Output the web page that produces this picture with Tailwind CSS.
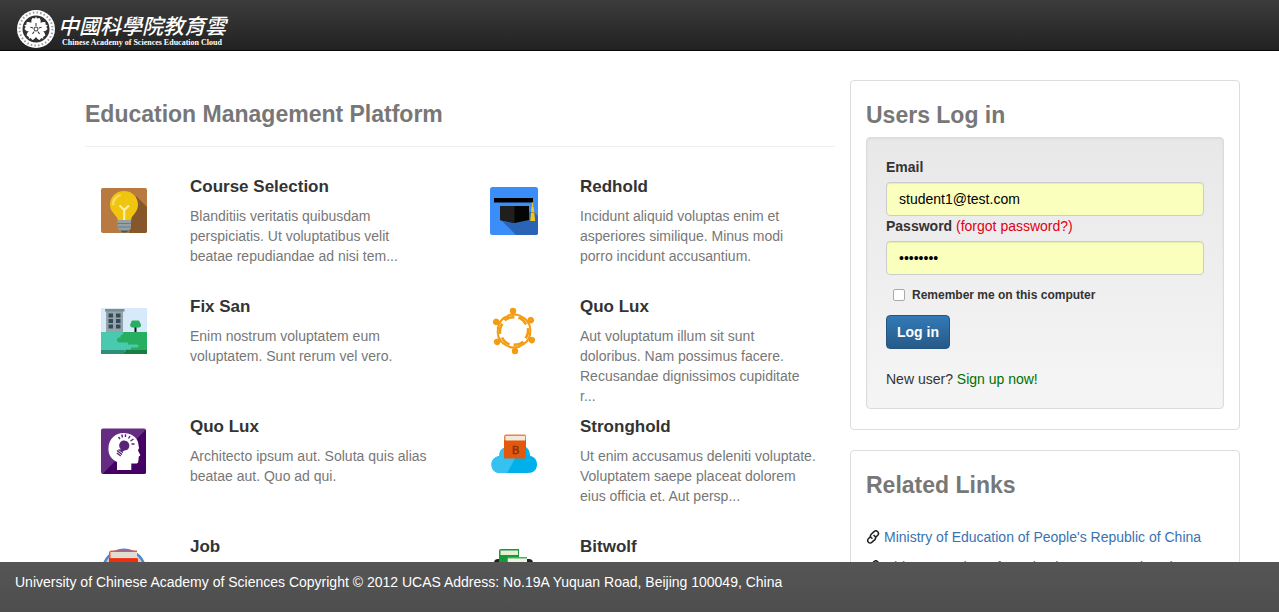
<!DOCTYPE html>
<html lang="en">
<head>
<meta charset="utf-8">
<meta name="viewport" content="width=device-width, initial-scale=1">
<title>Chinese Academy of Sciences Education Cloud</title>
<script src="https://cdn.jsdelivr.net/npm/@tailwindcss/browser@4"></script>
</head>
<body class="flex h-screen flex-col overflow-hidden bg-white font-['Liberation_Sans',Arial,sans-serif] text-sm leading-5 text-[#333]">

<header class="shrink-0 border-b border-[#080808] bg-linear-to-b from-[#3c3c3c] to-[#222] pl-4">
  <a href="#" class="flex h-[50px] items-center gap-0.5 pt-2 text-white">
    <svg class="size-10 shrink-0" viewBox="0 0 40 40" aria-hidden="true">
      <circle cx="20" cy="20" r="19" fill="#fff"/>
      <circle cx="20" cy="20" r="16.500" fill="none" stroke="#999" stroke-width="2" stroke-dasharray="1.500 2.200"/>
      <circle cx="20" cy="20" r="13.500" fill="#303030"/>
      <g fill="#fff">
        <path id="petal" d="M20 20C15.500 17 14 12 16.500 9L19 9.500L20 7.500L21 9.500L23.500 9C26 12 24.500 17 20 20Z"/>
        <use href="#petal" transform="rotate(72 20 20)"/>
        <use href="#petal" transform="rotate(144 20 20)"/>
        <use href="#petal" transform="rotate(216 20 20)"/>
        <use href="#petal" transform="rotate(288 20 20)"/>
      </g>
      <g stroke="#303030" stroke-width="1">
        <path id="stamen" d="M20 17V14"/>
        <use href="#stamen" transform="rotate(72 20 20)"/>
        <use href="#stamen" transform="rotate(144 20 20)"/>
        <use href="#stamen" transform="rotate(216 20 20)"/>
        <use href="#stamen" transform="rotate(288 20 20)"/>
      </g>
      <circle cx="20" cy="20" r="2" fill="#fff" stroke="#303030"/>
    </svg>
    <span class="flex flex-col items-center">
      <span lang="zh-Hant" class="font-['Noto_Sans_CJK_TC',sans-serif] text-[21px] leading-7 font-medium italic">中國科學院教育雲</span>
      <span class="font-['Liberation_Serif',serif] text-[8px] leading-2 font-bold">Chinese Academy of Sciences Education Cloud</span>
    </span>
  </a>
</header>

<main class="flex min-h-0 flex-1 items-start gap-[15px] overflow-hidden pt-[29px] pr-[39px] pl-[85px]">
  <section class="flex-1">
    <h1 class="border-b border-[#eee] pt-5 pb-[17px] text-[23px] leading-[29px] font-bold text-[#777]">Education Management Platform</h1>
    <div class="-mr-[30px] grid grid-cols-2 pt-[30px]">
      <article class="flex h-[120px] items-start gap-[42px] pl-[15px]">
        <svg class="mt-2.5 size-12 shrink-0" viewBox="0 0 48 48" aria-hidden="true">
          <rect x="1" y="1" width="46" height="45" rx="2" fill="#b87a40"/>
          <path d="M36 9L47 20V44a2 2 0 0 1-2 2H29Z" fill="#86572b"/>
          <path d="M24 4c-8 0-14 6-14 13.500 0 6 4 9 6.500 12.500.8 1.200 1 2 1.200 3h13c.2-1 .4-1.800 1.200-3C34.500 26.500 38 23.500 38 17.500 38 10 32 4 24 4Z" fill="#f1c40f"/>
          <path d="M12 17c0-5 3-8.500 7.500-9.500 2.500-.5 2.500 1 .5 1.800-3.500 1.500-5 4-5.500 7.700-.3 2-2.500 2-2.500 0Z" fill="#f8dc58"/>
          <path d="M19.500 18.500L24.200 23L29 18.500M24.200 22.500V33" fill="none" stroke="#faeeb0" stroke-width="2.200"/>
          <path d="M17.500 33h13.500v8.500c-2 1-2.500 4-6.700 4s-4.800-3-6.800-4Z" fill="#95a0a5"/>
          <path d="M17.500 36.500h13.500M17.500 40h13.500" stroke="#6f7a80"/>
          <path d="M20 43.500h9l-2.500 2h-4Z" fill="#4c555a"/>
        </svg>
        <div class="w-[238px]">
          <h2 class="mb-[9px] text-[17px] leading-5 font-bold">Course Selection</h2>
          <p class="text-[#777]">Blanditiis veritatis quibusdam perspiciatis. Ut voluptatibus velit beatae repudiandae ad nisi tem...</p>
        </div>
      </article>
      <article class="flex h-[120px] items-start gap-[42px] pl-[15px]">
        <svg class="mt-2.5 size-12 shrink-0" viewBox="0 0 48 48" aria-hidden="true">
          <rect width="48" height="48" rx="2.500" fill="#3b8df8"/>
          <path d="M11 33L26 48H45.500a2.500 2.500 0 0 0 2.500-2.500V29L43 24Z" fill="#2a65b5"/>
          <path d="M4 11H43V15.500H4Z" fill="#000"/>
          <path d="M10 19h29v14l-14.500 3L10 33Z" fill="#050505"/>
          <path d="M10 19h14.500v17L10 33Z" fill="#1f1f1f"/>
          <path d="M42.500 15.500v8" stroke="#f0c419" stroke-width="1.200"/>
          <path d="M41.500 20h2.200l1.500 14h-5Z" fill="#f0c419"/>
          <path d="M41 25.500h3.500" stroke="#b98d12"/>
        </svg>
        <div class="w-[238px]">
          <h2 class="mb-[9px] text-[17px] leading-5 font-bold">Redhold</h2>
          <p class="text-[#777]">Incidunt aliquid voluptas enim et asperiores similique. Minus modi porro incidunt accusantium.</p>
        </div>
      </article>
      <article class="flex h-[120px] items-start gap-[42px] pl-[15px]">
        <svg class="mt-2.5 size-12 shrink-0" viewBox="0 0 48 48" aria-hidden="true">
          <path d="M1 1h46v24H1Z" fill="#d6eafb"/>
          <path d="M1 25h46v22H1Z" fill="#27ae60"/>
          <path d="M24 43h23v4H24Z" fill="#1c7d42"/>
          <path d="M1 25h22.500c0 2-1 3-3 3.500v2H19.500a2.200 2.200 0 0 0 0 5H28v2h9a1.500 1.500 0 0 1 0 3H31v2h-5.500v2H1Z" fill="#48c9b0"/>
          <path d="M1 43h23.500v4H1Z" fill="#2d8f79"/>
          <path d="M6 4h17v21H6Z" fill="#95a5a6"/>
          <path d="M5 2h19.500v2.500H5Z" fill="#7f8c8d"/>
          <path d="M8.500 6.500h4.500v4H8.500ZM16 6.500h4.500v4H16ZM8.500 12h4.500v4H8.500ZM16 12h4.500v4H16ZM8.500 17.500h4.500v4H8.500ZM16 17.500h4.500v4H16Z" fill="#34495e"/>
          <path d="M35.500 19v6" stroke="#111" stroke-width="2"/>
          <path d="M32 20.500a2.600 2.600 0 0 1-1-4.500c0-2.500 2-2.500 2.300-2.500h4.700c.5 0 2 .5 2 2.500a2.600 2.600 0 0 1-.5 4.500Z" fill="#27ae60"/>
        </svg>
        <div class="w-[238px]">
          <h2 class="mb-[9px] text-[17px] leading-5 font-bold">Fix San</h2>
          <p class="text-[#777]">Enim nostrum voluptatem eum voluptatem. Sunt rerum vel vero.</p>
        </div>
      </article>
      <article class="flex h-[120px] items-start gap-[42px] pl-[15px]">
        <svg class="mt-2.5 size-12 shrink-0" viewBox="0 0 48 48" aria-hidden="true">
          <g id="person" fill="none" stroke="#f39c12">
            <circle cx="23" cy="4" r="3.200" fill="#f39c12" stroke="none"/>
            <path d="M21.500 5.500h3v3h-3Z" fill="#f39c12" stroke="none"/>
            <path d="M18 8.500A17 17 0 0 1 35 12" stroke-width="2"/>
            <path d="M28.500 10.500A14 14 0 0 1 36 17.500" stroke-width="2.600"/>
          </g>
          <use href="#person" transform="rotate(60 24 24)"/>
          <use href="#person" transform="rotate(120 24 24)"/>
          <use href="#person" transform="rotate(180 24 24)"/>
          <use href="#person" transform="rotate(240 24 24)"/>
          <use href="#person" transform="rotate(300 24 24)"/>
        </svg>
        <div class="w-[238px]">
          <h2 class="mb-[9px] text-[17px] leading-5 font-bold">Quo Lux</h2>
          <p class="text-[#777]">Aut voluptatum illum sit sunt doloribus. Nam possimus facere. Recusandae dignissimos cupiditate r...</p>
        </div>
      </article>
      <article class="flex h-[120px] items-start gap-[42px] pl-[15px]">
        <svg class="mt-2.5 size-12 shrink-0" viewBox="0 0 48 48" aria-hidden="true">
          <rect x="1" y="1.500" width="45" height="45.500" rx="2" fill="#652d82"/>
          <path d="M46 2.500V45a2 2 0 0 1-2 2H2.500Z" fill="#440062"/>
          <path d="M17 43V35C10.500 32 8 26.500 8.500 20.500 9 11.500 15.500 6 23.500 6 31 6 36.500 10 38 15l1 6-1 2.500 2.300 4.500c.2 1-1.500 1-1.500 1.500l-.5 5c-.2 1.500-1 2-2.500 2h-4.500V43Z" fill="#fff"/>
          <path d="M20.500 22c-1.500-2-2-4.500-.3-6.600 2-2.600 6-2.400 8 .1 2 2.600 1.300 6.200-1.500 7.500-1.400.6-3 .4-4 1.500l-2.500-1Z" fill="#582477"/>
          <path d="M17 23.500l5 4M16.800 26l4 3M18.500 22.500l4.500 3" stroke="#582477" stroke-width="1.400"/>
          <path d="M20 12l-1.500-2M22.500 10.500l-.7-3M25.500 10V7.300M28.500 11.500L30 9M30.500 14l3-2M31.500 17h3" stroke="#582477" stroke-width="1.400"/>
        </svg>
        <div class="w-[238px]">
          <h2 class="mb-[9px] text-[17px] leading-5 font-bold">Quo Lux</h2>
          <p class="text-[#777]">Architecto ipsum aut. Soluta quis alias beatae aut. Quo ad qui.</p>
        </div>
      </article>
      <article class="flex h-[120px] items-start gap-[42px] pl-[15px]">
        <svg class="mt-2.5 size-12 shrink-0" viewBox="0 0 48 48" aria-hidden="true">
          <path d="M10 46C4.500 46 1.500 42 1.500 37.500c0-4.500 3.500-8 8-8.500-.5-5 2.500-8 6-8.500C19 16 33 16 38 22c1.500 2 2 4.500 2 7 4.500.5 7 4 7 8.500 0 5-3.500 8.500-9 8.500Z" fill="#00b0ea"/>
          <path d="M10 46C4.500 46 1.500 42 1.500 37.500c0-4.500 3.500-8 8-8.500-.5-5 2.500-8 6-8.500H31L17 46Z" fill="#36c2f1"/>
          <path d="M14 12h22v18.500a1 1 0 0 1-1 1H15a1 1 0 0 1-1-1Z" fill="#e2590e"/>
          <path d="M16 7.500h18.500q1.500 0 1.500 2V13H14V9.500q0-2 2-2Z" fill="#ef7f4b"/>
          <path d="M15.500 9H35v4.500H15.500Z" fill="#f2e9dc"/>
          <text x="22" y="27" font-family="Liberation Sans" font-size="11" fill="#8a300c" stroke="#8a300c" stroke-width="0.500">B</text>
        </svg>
        <div class="w-[238px]">
          <h2 class="mb-[9px] text-[17px] leading-5 font-bold">Stronghold</h2>
          <p class="text-[#777]">Ut enim accusamus deleniti voluptate. Voluptatem saepe placeat dolorem eius officia et. Aut persp...</p>
        </div>
      </article>
      <article class="flex h-[120px] items-start gap-[42px] pl-[15px]">
        <svg class="mt-2.5 size-12 shrink-0" viewBox="0 0 48 48" aria-hidden="true">
          <circle cx="24" cy="24" r="22.500" fill="#4a86d8"/>
          <circle cx="24" cy="24" r="20" fill="#e3c7a0"/>
          <path d="M9 6q0-2.500 2.500-2.500H37V38H9Z" fill="#f0533a"/>
          <path d="M10.500 5H37v6H10.500Z" fill="#e2ddd3"/>
          <path d="M9 11.500h29V38H9Z" fill="#ee2e0c"/>
        </svg>
        <div class="w-[238px]">
          <h2 class="mb-[9px] text-[17px] leading-5 font-bold">Job</h2>
        </div>
      </article>
      <article class="flex h-[120px] items-start gap-[42px] pl-[15px]">
        <svg class="mt-2.5 size-12 shrink-0" viewBox="0 0 48 48" aria-hidden="true">
          <rect x="4" y="12" width="39" height="30" rx="4" fill="#222"/>
          <path d="M9 4q0-2 2-2h18v30H9Z" fill="#159a38"/>
          <path d="M10.500 3.500H28V8H10.500Z" fill="#e8ecd9"/>
          <path d="M17 12q0-2 2-2h18v26H17Z" fill="#49b45c"/>
          <path d="M18 11.500h19V18H18Z" fill="#f0f3e4"/>
        </svg>
        <div class="w-[238px]">
          <h2 class="mb-[9px] text-[17px] leading-5 font-bold">Bitwolf</h2>
        </div>
      </article>
    </div>
  </section>

  <aside class="flex w-[390px] shrink-0 flex-col gap-5">
    <section class="rounded border border-[#ddd] px-[15px] pt-5 pb-5">
      <h2 class="mb-2 text-[23px] leading-7 font-bold text-[#777]">Users Log in</h2>
      <form class="rounded border border-[#dcdcdc] bg-linear-to-b from-[#e8e8e8] to-[#f5f5f5] p-[19px] shadow-[inset_0_1px_3px_rgba(0,0,0,0.05)]">
        <label for="email" class="mb-[5px] block font-bold">Email</label>
        <input id="email" type="email" value="student1@test.com" class="block h-[34px] w-full rounded border border-[#ccc] bg-[#faffbd] px-3 text-black shadow-[inset_0_1px_1px_rgba(0,0,0,0.075)]">
        <div class="mb-[5px]"><label for="password" class="font-bold">Password</label> <a href="#" class="text-[#e00012]">(forgot password?)</a></div>
        <input id="password" type="password" value="password" class="block h-[34px] w-full rounded border border-[#ccc] bg-[#faffbd] px-3 text-black shadow-[inset_0_1px_1px_rgba(0,0,0,0.075)]">
        <label class="my-2.5 flex items-center gap-[7px] pl-[7px] text-xs leading-5 font-bold">
          <input type="checkbox" class="size-3 appearance-none rounded-xs border border-[#aaa] bg-white">
          Remember me on this computer
        </label>
        <button type="button" class="block h-[34px] rounded border border-[#245580] bg-linear-to-b from-[#337ab7] to-[#265a88] px-2.5 font-bold text-white">Log in</button>
        <p class="mt-5">New user? <a href="#" class="text-[#007000]">Sign up now!</a></p>
      </form>
    </section>
    <section class="rounded border border-[#ddd] px-[15px] pt-5">
      <h2 class="text-[23px] leading-7 font-bold text-[#777]">Related Links</h2>
      <ul class="mt-7 flex flex-col gap-2.5">
        <li class="flex items-center gap-1">
          <svg class="size-3.5" viewBox="0 0 14 14" fill="none" stroke="#222" stroke-width="1.600" aria-hidden="true"><path d="M5 7.500C4 6.500 4.500 5 5.500 4L8 1.700c1-1 2.700-1 3.700 0s.9 2.500 0 3.600L10 7M9 6.300c1 1 .7 2.500-.4 3.600L6 12.200c-1 1-2.600 1-3.600 0s-1-2.500 0-3.500L4 7M5 7.500l1.500 1.200M9 6.300L7.500 5"/></svg>
          <a href="#" class="text-[#3a72b0]">Ministry of Education of People's Republic of China</a>
        </li>
        <li class="flex items-center gap-1">
          <svg class="size-3.5" viewBox="0 0 14 14" fill="none" stroke="#222" stroke-width="1.600" aria-hidden="true"><path d="M5 7.500C4 6.500 4.500 5 5.500 4L8 1.700c1-1 2.700-1 3.700 0s.9 2.500 0 3.600L10 7M9 6.300c1 1 .7 2.500-.4 3.600L6 12.200c-1 1-2.600 1-3.600 0s-1-2.500 0-3.500L4 7M5 7.500l1.500 1.200M9 6.300L7.500 5"/></svg>
          <a href="#" class="text-[#3a72b0]">Chinese Society of Academic Degrees Education</a>
        </li>
      </ul>
    </section>
  </aside>
</main>

<footer class="h-[50px] shrink-0 bg-linear-to-b from-[#555] to-[#4e4e4e] px-[15px] pt-2.5 text-white">
  <p>University of Chinese Academy of Sciences Copyright © 2012 UCAS Address: No.19A Yuquan Road, Beijing 100049, China</p>
</footer>
</body>
</html>
